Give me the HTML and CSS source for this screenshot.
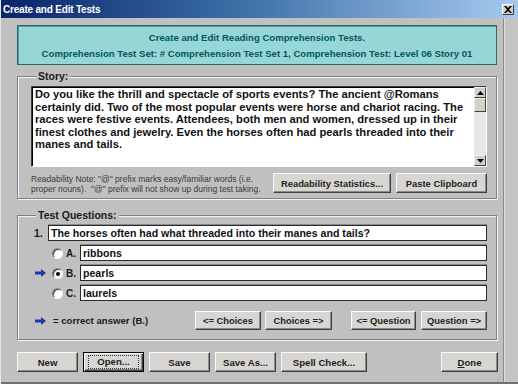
FILE: index.html
```html
<!DOCTYPE html>
<html>
<head>
<meta charset="utf-8">
<link rel="stylesheet" href="styles.css">
</head>
<body>
<div class="window">
  <div class="titlebar">
    <span class="title">Create and Edit Tests</span>
    <span class="close"><svg width="8" height="7" viewBox="0 0 8 7"><path d="M0 0h2l2 2 2-2h2L5 3.5 8 7H6L4 5 2 7H0l3-3.5z" fill="#000"/></svg></span>
  </div>
  <div class="body">
    <div class="content">
      <div class="header">
        <div>Create and Edit Reading Comprehension Tests.</div>
        <div>Comprehension Test Set: # Comprehension Test Set 1, Comprehension Test: Level 06 Story 01</div>
      </div>

      <fieldset class="group story">
        <legend>Story:</legend>
        <div class="textarea">
          <div class="text">Do you like the thrill and spectacle of sports events? The ancient @Romans certainly did. Two of the most popular events were horse and chariot racing. The races were festive events. Attendees, both men and women, dressed up in their finest clothes and jewelry. Even the horses often had pearls threaded into their manes and tails.</div>
          <div class="scrollbar">
            <div class="sb-btn"><svg width="7" height="4" viewBox="0 0 7 4"><path d="M3.5 0L7 4H0z" fill="#000"/></svg></div>
            <div class="sb-thumb"></div>
            <div class="sb-track"></div>
            <div class="sb-btn"><svg width="7" height="4" viewBox="0 0 7 4"><path d="M0 0h7L3.5 4z" fill="#000"/></svg></div>
          </div>
        </div>
        <div class="note-row">
          <div class="note">Readability Note: "@" prefix marks easy/familiar words (i.e.<br>proper nouns).&nbsp; "@" prefix will not show up during test taking.</div>
          <button class="btn w-stats">Readability Statistics...</button>
          <button class="btn w-paste">Paste Clipboard</button>
        </div>
      </fieldset>

      <fieldset class="group questions">
        <legend>Test Questions:</legend>
        <div class="q-row">
          <span class="qnum">1.</span>
          <div class="field">The horses often had what threaded into their manes and tails?</div>
        </div>
        <div class="c-row">
          <span class="arrow-slot"></span>
          <span class="radio"></span>
          <span class="clabel">A.</span>
          <div class="field">ribbons</div>
        </div>
        <div class="c-row">
          <span class="arrow-slot"><svg class="arrow" width="11" height="8" viewBox="0 0 11 8"><path d="M0 2.5h6V0l5 4-5 4V5.5H0z" fill="#1c3aa8"/></svg></span>
          <span class="radio checked"></span>
          <span class="clabel">B.</span>
          <div class="field">pearls</div>
        </div>
        <div class="c-row">
          <span class="arrow-slot"></span>
          <span class="radio"></span>
          <span class="clabel">C.</span>
          <div class="field">laurels</div>
        </div>
        <div class="a-row">
          <span class="arrow-slot"><svg class="arrow" width="11" height="8" viewBox="0 0 11 8"><path d="M0 2.5h6V0l5 4-5 4V5.5H0z" fill="#1c3aa8"/></svg></span>
          <span class="legend-text">= correct answer (B.)</span>
          <button class="btn w-ch1">&lt;= Choices</button>
          <button class="btn w-ch2">Choices =&gt;</button>
          <button class="btn w-q1 gap">&lt;= Question</button>
          <button class="btn w-q2">Question =&gt;</button>
        </div>
      </fieldset>

      <div class="bottom">
        <button class="btn big w61">New</button>
        <button class="btn big w61 default"><span class="focus">Open...</span></button>
        <button class="btn big w61">Save</button>
        <button class="btn big w61">Save As...</button>
        <button class="btn big w86">Spell Check...</button>
        <button class="btn big w57 push"><u>D</u>one</button>
      </div>
    </div>
    <div class="edge"></div>
  </div>
</div>
</body>
</html>
```

FILE: styles.css
```css
* { box-sizing: border-box; }
html, body { margin: 0; padding: 0; }
body {
  width: 518px;
  height: 384px;
  overflow: hidden;
  background: #c0c0c0;
  font-family: "Liberation Sans", Arial, sans-serif;
}
.window {
  width: 518px;
  height: 384px;
  display: flex;
  flex-direction: column;
  background: #c0c0c0;
  border-left: 1px solid #e8e8e8;
}
.titlebar {
  height: 18px;
  flex: none;
  display: flex;
  align-items: center;
  justify-content: space-between;
  padding: 0 4px 0 2px;
  background: linear-gradient(to right, #0a246a 0%, #3a6ea5 45%, #a6caf0 100%);
}
.title {
  color: #fff;
  font-weight: bold;
  font-size: 10px;
  letter-spacing: -0.2px;
}
.close {
  width: 12px;
  height: 11px;
  background: #d4d0c8;
  border: 1px solid;
  border-color: #fff #404040 #404040 #fff;
  display: flex;
  align-items: center;
  justify-content: center;
  margin-top: 1px;
}
.body {
  flex: 1;
  display: flex;
  border-bottom: 2px solid #707070;
}
.content {
  width: 502px;
  padding: 7px 0 0 16px;
  display: flex;
  flex-direction: column;
}
.edge {
  flex: 1;
  border-left: 1px solid #8a8a8a;
  box-shadow: inset 1px 0 0 #e0e0e0;
  background: #c4c4c4;
}
.header {
  width: 480px;
  height: 40px;
  background: #97d6d6;
  border: 1px solid #2e6868;
  box-shadow: inset 1px 1px 0 #5c9a9a;
  color: #005a5a;
  font-weight: bold;
  font-size: 9.6px;
  text-align: center;
  display: flex;
  flex-direction: column;
  justify-content: center;
  gap: 5px;
  line-height: 11px;
}
.group {
  width: 480px;
  margin: 4px 0 0 0;
  padding: 4px 9px 5px 13px;
  border: 1px solid #808080;
  box-shadow: inset 1px 1px 0 #f4f4f4, 1px 1px 0 #f4f4f4;
  min-width: 0;
}
.group legend {
  padding: 0 2px;
  margin-left: 5px;
  font-weight: bold;
  font-size: 10.5px;
  line-height: 12px;
  color: #1a1a1a;
  background: #c0c0c0;
}
.story { margin-top: 5px; }
.questions { margin-top: 10px; padding-bottom: 9px; }
.textarea {
  height: 81px;
  background: #fff;
  border: 1px solid;
  border-color: #404040 #fff #fff #404040;
  box-shadow: inset 1px 1px 0 #000;
  display: flex;
}
.text {
  flex: 1;
  padding: 1px 4px 0 3px;
  font-weight: bold;
  font-size: 11.2px;
  line-height: 12.6px;
  color: #111;
}
.scrollbar {
  width: 12px;
  display: flex;
  flex-direction: column;
  background: #e8e8e8;
}
.sb-btn, .sb-thumb {
  background: #d4d0c8;
  border: 1px solid;
  border-color: #f0f0f0 #404040 #404040 #f0f0f0;
  display: flex;
  align-items: center;
  justify-content: center;
}
.sb-btn { height: 11px; }
.sb-thumb { height: 14px; }
.sb-track { flex: 1; }
.note-row {
  display: flex;
  align-items: center;
  margin-top: 6px;
  height: 20px;
}
.note {
  flex: 1;
  font-size: 8.5px;
  line-height: 10px;
  color: #3a3a3a;
  padding-top: 1px;
  white-space: nowrap;
}
.btn {
  font-family: "Liberation Sans", Arial, sans-serif;
  font-weight: bold;
  font-size: 9.4px;
  color: #1e1e1e;
  background: #d8d6d2;
  border: 1px solid;
  border-color: #fafafa #404040 #404040 #fafafa;
  box-shadow: inset -1px -1px 0 #8a8a8a;
  padding: 0;
  height: 19px;
  display: flex;
  align-items: center;
  justify-content: center;
  flex: none;
}
.w-stats { width: 118px; height: 20px; }
.w-paste { width: 91px; height: 20px; margin-left: 5px; }
.q-row, .c-row {
  display: flex;
  align-items: center;
  height: 16px;
}
.c-row { margin-top: 4px; }
.c-row:last-of-type { margin-top: 5px; }
.qnum {
  width: 17px;
  padding-left: 3px;
  font-weight: bold;
  font-size: 10.5px;
  color: #1a1a1a;
}
.field {
  flex: 1;
  height: 16px;
  background: #fff;
  border: 1px solid #2a2a2a;
  box-shadow: 0 -1px 0 #8a8a8a;
  font-weight: bold;
  font-size: 10.6px;
  line-height: 14px;
  padding-left: 2px;
  color: #111;
  white-space: nowrap;
}
.arrow-slot {
  width: 20px;
  padding-left: 4px;
  display: flex;
  align-items: center;
  flex: none;
}
.radio {
  width: 11px;
  height: 11px;
  border-radius: 50%;
  background: #fff;
  border: 1px solid;
  border-color: #808080 #f4f4f4 #f4f4f4 #808080;
  box-shadow: inset 1px 1px 0 #404040;
  margin-left: 1px;
  flex: none;
  position: relative;
}
.radio.checked::after {
  content: "";
  position: absolute;
  left: 3px;
  top: 3px;
  width: 4px;
  height: 4px;
  border-radius: 50%;
  background: #000;
}
.clabel {
  width: 14px;
  margin-left: 3px;
  font-weight: bold;
  font-size: 10px;
  color: #1a1a1a;
  flex: none;
}
.a-row {
  display: flex;
  align-items: center;
  margin-top: 10px;
  height: 19px;
}
.legend-text {
  flex: 1;
  font-weight: bold;
  font-size: 9.6px;
  color: #1a1a1a;
  padding-left: 2px;
}
.w-ch1 { width: 66px; }
.w-ch2 { width: 67px; margin-left: 4px; }
.w-q1 { width: 65px; margin-left: 19px; }
.w-q2 { width: 66px; margin-left: 5px; }
.bottom {
  display: flex;
  margin-top: 12px;
  gap: 5px;
  width: 481px;
}
.btn.big { height: 20px; font-size: 9.6px; }
.w61 { width: 61px; }
.w86 { width: 86px; }
.w57 { width: 57px; }
.push { margin-left: auto; }
.default {
  border: 1px solid #000;
  box-shadow: inset 1px 1px 0 #fafafa, inset -1px -1px 0 #404040, inset -2px -2px 0 #8a8a8a;
}
.focus {
  border: 1px dotted #333;
  padding: 1px 8px;
  line-height: 10px;
}
```
